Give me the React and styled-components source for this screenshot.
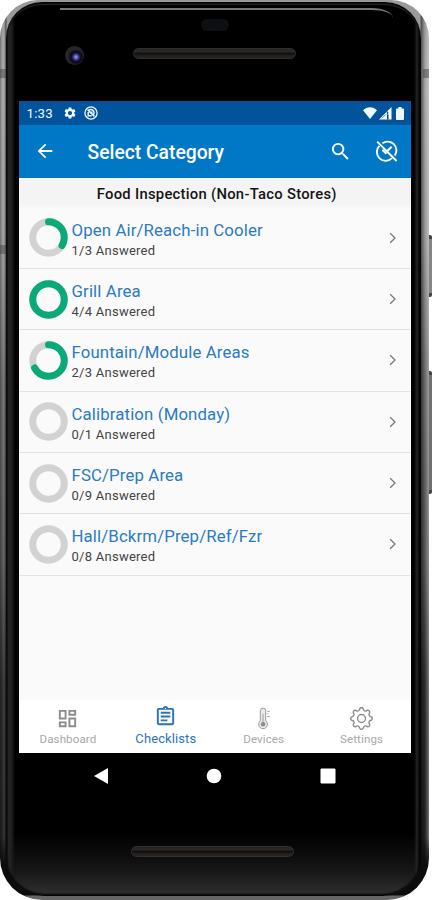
import React from 'react';
import styled, { createGlobalStyle } from 'styled-components';
import { MdArrowBack, MdSearch, MdSettings, MdOutlineDashboard, MdOutlineAssignment } from 'react-icons/md';
import { BsGear } from 'react-icons/bs';

const GlobalStyle = createGlobalStyle`
    * {
        box-sizing: border-box;
    }

    body {
        margin: 0;
        background: #ffffff;
        font-family: Roboto, "Liberation Sans", sans-serif;
        overflow: hidden;
    }
`;

const Stage = styled.div`
    position: relative;
    width: 432px;
    height: 900px;
`;

const SideKey = styled.div`
    position: absolute;
    right: 0;
    top: ${ props => props.$top }px;
    width: 6px;
    height: ${ props => props.$height }px;
    border-radius: 0 2px 2px 0;
    border-top: 4px solid #444444;
    border-bottom: 4px solid #444444;
    background: ${ props => props.$color };
`;

const Frame = styled.div`
    position: relative;
    width: 429px;
    height: 900px;
    padding: 2px 8px 4px 6px;
    border-radius: 38px 38px 42px 42px;
    overflow: hidden;
    background:
        linear-gradient(180deg, transparent 93%, #0c0c0c 96%, #0c0c0c 99.4%, #666666 99.6%),
        linear-gradient(90deg, rgba(0, 0, 0, 0.3) 0, transparent 2px, rgba(255, 255, 255, 0.1) 4px, rgba(0, 0, 0, 0.5) 6px, transparent 7px),
        linear-gradient(270deg, rgba(255, 255, 255, 0.35) 0, transparent 4px, rgba(0, 0, 0, 0.5) 8px, transparent 9px),
        linear-gradient(180deg, #999999 0, #a4a4a4 10%, #999999 26%, #6b6b6b 42%, #565656 62%, #2d2d2d 76%, #1c1c1c 100%);
`;

const AntennaLine = styled.div`
    position: absolute;
    left: ${ props => props.$right ? "auto" : "0" };
    right: ${ props => props.$right ? "0" : "auto" };
    top: ${ props => props.$top }px;
    width: 6px;
    height: 9px;
    background: rgba(60, 60, 60, 0.45);
`;

const Glass = styled.div`
    height: 894px;
    padding-left: 13px;
    border-radius: 36px 36px 38px 38px;
    display: flex;
    flex-direction: column;
    background:
        linear-gradient(90deg, #080808 0, #272727 3px, #1b1b1b 6px, transparent 9px),
        linear-gradient(270deg, #050505 0, #080808 2px, #242424 4px, transparent 7px),
        linear-gradient(180deg, #000000 0, #000000 93%, #151515 97%, #303030 100%);
    box-shadow: inset 0 2px 2px #000000, inset 0 3px 1px #333333, inset 0 -2px 2px #050505;
`;

const TopEdge = styled.div`
    height: 10px;
    margin: 6px 28px 0 41px;
    border-top: 2px solid #777777;
    border-radius: 0 30px 0 0 / 0 14px 0 0;
`;

const TopPanel = styled.div`
    height: 83px;
    padding-left: 46px;
    display: flex;
    align-items: flex-start;
`;

const Camera = styled.div`
    width: 19px;
    height: 19px;
    margin-top: 28px;
    border-radius: 50%;
    background: radial-gradient(circle at 58% 58%, #a4a4f0 0, #5555bd 2px, #15153c 4px, #09090f 6px, #202020 7px, #282828 9px);
`;

const TopCenter = styled.div`
    margin-left: 49px;
    width: 163px;
    display: flex;
    flex-direction: column;
    align-items: center;
`;

const Sensor = styled.div`
    width: 28px;
    height: 12px;
    margin-top: 1px;
    border-radius: 6px;
    background: #0e0f13;
`;

const Grille = styled.div`
    width: 163px;
    height: 11px;
    border-radius: 6px;
    border: 1px solid #333130;
    background: linear-gradient(180deg, #252321 0, #2b2826 30%, #11100f 50%, #252321 80%);
`;

const TopGrille = styled(Grille)`
    margin-top: 17px;
`;

const Screen = styled.div`
    width: 391.5px;
    height: 652px;
    display: flex;
    flex-direction: column;
    background: #fafafa;
`;

const StatusBar = styled.div`
    height: 23.5px;
    flex: none;
    padding: 1px 7px 0 7.5px;
    display: flex;
    align-items: center;
    background: #01539c;
    color: #f2f6ff;
`;

const Clock = styled.span`
    width: 36px;
    font-size: 13.3px;
    letter-spacing: 0.2px;
`;

const StatusIcons = styled.div`
    display: flex;
    align-items: center;
    gap: ${ props => props.$gap }px;
    margin-left: ${ props => props.$end ? "auto" : "0" };
`;

const AppBar = styled.div`
    height: 53.5px;
    flex: none;
    padding: 0 13px 0 15px;
    display: flex;
    align-items: center;
    background: #0178c5;
    color: #ffffff;
`;

const Title = styled.h1`
    flex: 1;
    margin: 3px 0 0 31.5px;
    font-size: 19.3px;
    font-weight: 500;
    line-height: 24px;
    white-space: nowrap;
`;

const Actions = styled.div`
    display: flex;
    align-items: center;
    gap: 23.5px;
`;

const Subheader = styled.div`
    height: 29.5px;
    flex: none;
    padding: 1px 0 0 4px;
    text-align: center;
    line-height: 30px;
    font-size: 14.8px;
    font-weight: 500;
    letter-spacing: 0.28px;
    color: #151515;
    background: linear-gradient(180deg, #f4f4f4 0, #f4f4f4 85%, #f9f9f9 100%);
`;

const List = styled.div`
    flex: 1;
`;

const Row = styled.div`
    height: 61.35px;
    padding: 0 11.5px 0 9.5px;
    display: flex;
    align-items: center;
    border-bottom: 1.5px solid #e3e3e3;
`;

const RowText = styled.div`
    flex: 1;
    margin: 5px 0 0 4px;
    white-space: nowrap;
`;

const RowTitle = styled.div`
    font-size: 16.8px;
    line-height: 21px;
    letter-spacing: 0.13px;
    color: #2b7ac2;
`;

const RowCount = styled.div`
    font-size: 13px;
    line-height: 20px;
    letter-spacing: 0.26px;
    color: #444444;
`;

const TabBar = styled.div`
    height: 53px;
    flex: none;
    display: grid;
    grid-template-columns: repeat(4, 1fr);
    background: #ffffff;
`;

const Tab = styled.div`
    padding-top: ${ props => props.$active ? "5px" : "7px" };
    display: flex;
    flex-direction: column;
    align-items: center;
    gap: ${ props => props.$active ? "3px" : "1px" };
    color: ${ props => props.$active ? "#2873be" : "#a8a8a8" };
    font-size: ${ props => props.$active ? "13px" : "11.6px" };
    line-height: 16px;
    letter-spacing: 0.1px;

    svg {
        height: 23px;
        color: ${ props => props.$active ? "#2873be" : "#8c8c8c" };
    }
`;

const NavKeys = styled.div`
    height: 46px;
    padding: 0 75px 0 74px;
    width: 391.5px;
    display: flex;
    align-items: center;
    justify-content: space-between;
`;

const BottomGrille = styled(Grille)`
    margin: 47px 0 0 112px;
`;

function RunningIcon() {
    return (
        <svg width="14" height="14" viewBox="0 0 14 14" fill="none" stroke="currentColor">
            <circle cx="7" cy="7" r="6.1" strokeWidth="1.3" />
            <path d="M3.6 3.6 L10.4 10.4 M4.2 6 V9.8 H7.6 M5.2 3.8 C8.6 2.8 10.8 5.2 9.8 8.4 M6.6 6.2 H8.4" strokeWidth="1.5" />
        </svg>
    )
}

function WifiIcon() {
    return (
        <svg width="14" height="12" viewBox="0 0 14 12" fill="currentColor">
            <path d="M0 3.2 C4 -0.8 10 -0.8 14 3.2 L7 12 Z" />
        </svg>
    )
}

function SignalIcon() {
    return (
        <svg width="13" height="13" viewBox="0 0 13 13">
            <path d="M0 12.5 L12.5 0 V12.5 Z" fill="#ffffff" />
            <path d="M8 12.5 V7.5 H9.6 V12.5 Z M7.6 3.5 L9.8 6 L8 7.5" fill="#01539c" />
            <path d="M2.8 11.5 L7 7.2" stroke="#01539c" strokeWidth="0.7" />
        </svg>
    )
}

function BatteryIcon() {
    return (
        <svg width="8" height="13" viewBox="0 0 8 13" fill="currentColor">
            <path d="M2.4 0 H5.6 V1.4 H7 Q8 1.4 8 2.4 V12 Q8 13 7 13 H1 Q0 13 0 12 V2.4 Q0 1.4 1 1.4 H2.4 Z" />
        </svg>
    )
}

function HideCompletedIcon() {
    return (
        <svg width="22" height="22" viewBox="0 0 22 22" fill="none" stroke="currentColor" strokeWidth="1.9">
            <path d="M6.4 3.3 A8.8 8.8 0 0 1 18.7 15.6 M16 18.2 A8.8 8.8 0 0 1 3.4 5.9" />
            <path d="M1.2 1.6 L20.6 21" />
            <path d="M6.4 9.8 L10.4 13.8 M11.6 10.8 L15.6 6.8" strokeWidth="2.2" />
        </svg>
    )
}

function ThermometerIcon() {
    return (
        <svg width="16" height="23" viewBox="0 0 16 24" fill="none" stroke="currentColor" strokeWidth="0.9">
            <path d="M4.2 14.4 V4 A2.8 2.8 0 0 1 9.8 4 V14.4 A4.6 4.6 0 1 1 4.2 14.4 Z" fill="#ececec" />
            <circle cx="7" cy="18" r="2.4" fill="currentColor" stroke="none" />
            <path d="M7 7 V17" />
            <path d="M11.5 4.5 H14 M11.5 7 H12.5 M11.5 10 H14" />
        </svg>
    )
}

function ChevronIcon() {
    return (
        <svg width="12" height="12" viewBox="0 0 12 12" fill="none" stroke="#777777" strokeWidth="1.3">
            <path d="M3.2 1.2 L8 6 L3.2 10.8" />
        </svg>
    )
}

function ProgressRing({ done, total }) {
    const radius = 15.75;
    const length = 2 * Math.PI * radius;

    return (
        <svg width="39" height="39" viewBox="0 0 39 39" fill="none" strokeWidth="7">
            <circle cx="19.5" cy="19.5" r={ radius } stroke="#d2d2d2" />
            { done > 0 &&
            <circle cx="19.5" cy="19.5" r={ radius } stroke="#0aaa78"
                strokeLinecap={ done < total ? "round" : "butt" }
                strokeDasharray={ `${ length * done / total } ${ length }` }
                transform="rotate(-90 19.5 19.5)" /> }
        </svg>
    )
}

const categories = [
    { name: "Open Air/Reach-in Cooler", done: 1, total: 3 },
    { name: "Grill Area", done: 4, total: 4 },
    { name: "Fountain/Module Areas", done: 2, total: 3 },
    { name: "Calibration (Monday)", done: 0, total: 1 },
    { name: "FSC/Prep Area", done: 0, total: 9 },
    { name: "Hall/Bckrm/Prep/Ref/Fzr", done: 0, total: 8 },
];

const tabs = [
    { label: "Dashboard", icon: <MdOutlineDashboard size={ 23 } /> },
    { label: "Checklists", icon: <MdOutlineAssignment size={ 23 } />, active: true },
    { label: "Devices", icon: <ThermometerIcon /> },
    { label: "Settings", icon: <BsGear size={ 23 } /> },
];

function CategoryRow({ category }) {
    return (
        <Row>
            <ProgressRing done={ category.done } total={ category.total } />
            <RowText>
                <RowTitle>{ category.name }</RowTitle>
                <RowCount>{ `${ category.done }/${ category.total } Answered` }</RowCount>
            </RowText>
            <ChevronIcon />
        </Row>
    )
}

export default function App() {
    return (
        <Stage>
            <GlobalStyle />
            <SideKey $top={ 235 } $height={ 62 } $color="#858585" />
            <SideKey $top={ 371 } $height={ 123 } $color="#707070" />
            <Frame>
                <AntennaLine $top={ 69 } />
                <AntennaLine $top={ 69 } $right />
                <AntennaLine $top={ 245 } />
                <Glass>
                    <TopEdge />
                    <TopPanel>
                        <Camera />
                        <TopCenter>
                            <Sensor />
                            <TopGrille />
                        </TopCenter>
                    </TopPanel>
                    <Screen>
                        <StatusBar>
                            <Clock>1:33</Clock>
                            <StatusIcons $gap={ 7 }>
                                <MdSettings size={ 14 } />
                                <RunningIcon />
                            </StatusIcons>
                            <StatusIcons $gap={ 2 } $end>
                                <WifiIcon />
                                <SignalIcon />
                                <span />
                                <BatteryIcon />
                            </StatusIcons>
                        </StatusBar>
                        <AppBar>
                            <MdArrowBack size={ 22 } />
                            <Title>Select Category</Title>
                            <Actions>
                                <MdSearch size={ 23 } />
                                <HideCompletedIcon />
                            </Actions>
                        </AppBar>
                        <Subheader>Food Inspection (Non-Taco Stores)</Subheader>
                        <List>
                            { categories.map(category =>
                            <CategoryRow key={ category.name } category={ category } />) }
                        </List>
                        <TabBar>
                            { tabs.map(tab =>
                            <Tab key={ tab.label } $active={ tab.active }>
                                { tab.icon }
                                { tab.label }
                            </Tab>) }
                        </TabBar>
                    </Screen>
                    <NavKeys>
                        <svg width="16" height="18" viewBox="0 0 16 18" fill="#ffffff">
                            <path d="M15 1 V17 L1 9 Z" />
                        </svg>
                        <svg width="16" height="16" viewBox="0 0 16 16" fill="#ffffff">
                            <circle cx="8" cy="8" r="7.3" />
                        </svg>
                        <svg width="16" height="16" viewBox="0 0 16 16" fill="#ffffff">
                            <rect x="0.5" y="0.5" width="15" height="15" rx="1" />
                        </svg>
                    </NavKeys>
                    <BottomGrille />
                </Glass>
            </Frame>
        </Stage>
    )
}
